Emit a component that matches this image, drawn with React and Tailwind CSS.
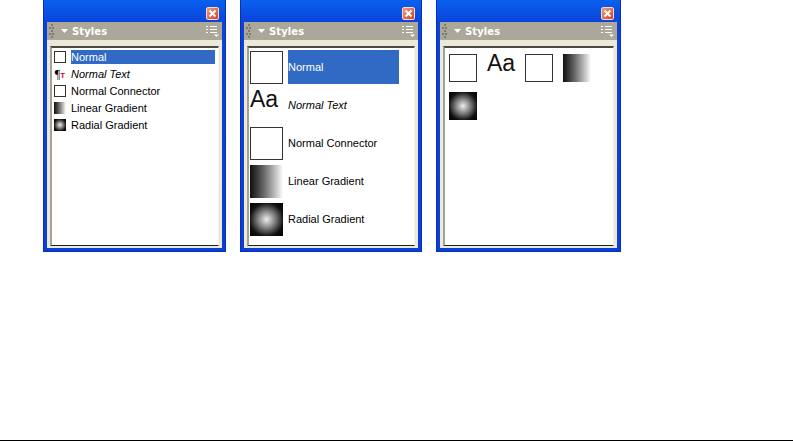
const sans = { fontFamily: '"Liberation Sans", Arial, sans-serif' };

function CloseBtn() {
  return (
    <div className="w-[13px] h-[13px] rounded-[2px] border border-[#f3d9cf] bg-gradient-to-br from-[#ee9a7c] to-[#d8391c] flex items-center justify-center">
      <svg width="9" height="9" viewBox="0 0 9 9"><path d="M1.5 1.5L7.5 7.5M7.5 1.5L1.5 7.5" stroke="#fff" strokeWidth="2" /></svg>
    </div>
  );
}

function Grip() {
  return (
    <svg width="5" height="14" viewBox="0 0 5 14" className="shrink-0">
      {[[2,0],[0,3],[3,3],[2,6],[0,9],[3,9],[2,12]].map(([x,y],i)=>(
        <rect key={i} x={x} y={y} width="2" height="2" fill="#7f7b6c" />
      ))}
    </svg>
  );
}

function Menu() {
  return (
    <svg width="13" height="12" viewBox="0 0 13 12" className="shrink-0">
      <path d="M0 1.5h2M4 1.5h7M0 4.5h2M4 4.5h7M0 7.5h2M4 7.5h7" stroke="#fff" strokeWidth="1.2" />
      <path d="M8 9.5h5l-2.5 2.5z" fill="#fff" />
    </svg>
  );
}

function Panel({ width, children, pad }) {
  return (
    <div className={`${width} h-[252px] shrink-0 flex flex-col bg-[linear-gradient(to_bottom,#0a60ee_0px,#0a44da_22px,#0a3ed6_100%)] border-x-[1px] border-b-[1px] border-[#0a2fb8] px-[3px] pb-[3px]`}>
      <div className="h-[22px] shrink-0 flex items-end justify-end pb-[2px] pr-[3px]"><CloseBtn /></div>
      <div className="h-[18px] shrink-0 bg-[#aca899] flex items-center pl-[2px] pr-[3px]">
        <Grip />
        <svg width="7" height="4" viewBox="0 0 7 4" className="ml-[7px] mr-[4px]"><path d="M0 0h7L3.5 4z" fill="#fff" /></svg>
        <span className="text-[10px] font-bold text-white flex-1 tracking-[0.1px]" style={{ fontFamily: '"DejaVu Sans", sans-serif' }}>Styles</span>
        <Menu />
      </div>
      <div className="flex-1 bg-[#ece9d8] pt-[6px] px-[3px] pb-[2px] flex flex-col min-h-0">
        <div className={`flex-1 bg-white border-t-2 border-l-2 border-t-[#4a4a44] border-l-[#a5a296] border-b border-b-[#222] border-r border-r-[#f5f3e8] ${pad}`} style={sans}>
          {children}
        </div>
      </div>
    </div>
  );
}

const boxSm = "w-[12px] h-[12px] border border-[#333] bg-white";

function Row1({ icon, label, selected, italic }) {
  return (
    <div className="h-[17px] flex items-center">
      <div className="w-[14px] flex justify-center mr-[4px] shrink-0">{icon}</div>
      <span className={`flex-1 h-[14px] leading-[14px] text-[11px] ${selected ? "bg-[#316ac5] text-white" : "text-black"} ${italic ? "italic" : ""}`}>{label}</span>
    </div>
  );
}

const LinearBg = "bg-gradient-to-r from-[#111] to-white";
const RadialBg = "bg-[radial-gradient(circle,#eee_0%,#777_40%,#111_72%,#000_100%)]";

function Row2({ icon, label, selected, italic }) {
  return (
    <div className="h-[38px] flex items-center">
      <div className="w-[33px] h-[33px] mr-[5px] shrink-0 flex items-center justify-center">{icon}</div>
      <span className={`h-[34px] leading-[34px] text-[11px] w-[111px] ${selected ? "bg-[#316ac5] text-white" : "text-black"} ${italic ? "italic" : ""}`}>{label}</span>
    </div>
  );
}

function AaBig({ size }) {
  return <span className={`${size} leading-none text-[#111]`}>Aa</span>;
}

export default function App() {
  return (
    <div className="w-[793px] h-[442px] bg-white flex flex-col justify-between overflow-hidden">
      <div className="flex pl-[43px] gap-[14px]">
        <Panel width="w-[183px]" pad="pl-[1px] pr-[3px]">
          <Row1 selected label="Normal" icon={<div className={boxSm} />} />
          <Row1 italic label="Normal Text" icon={
            <span className="flex items-end leading-none whitespace-nowrap text-black">
              <span className="text-[12px]" style={{ fontFamily: '"Liberation Serif", serif' }}>¶</span>
              <span className="text-[#d01010] font-bold text-[8px]">T</span>
            </span>
          } />
          <Row1 label="Normal Connector" icon={<div className={boxSm} />} />
          <Row1 label="Linear Gradient" icon={<div className={`w-[12px] h-[12px] ${LinearBg}`} />} />
          <Row1 label="Radial Gradient" icon={<div className={`w-[12px] h-[12px] ${RadialBg}`} />} />
        </Panel>
        <Panel width="w-[182px]" pad="pl-[1px] pr-[2px]">
          <Row2 selected label="Normal" icon={<div className="w-[33px] h-[33px] border border-[#333] bg-white" />} />
          <Row2 italic label="Normal Text" icon={<div className="w-[33px] h-[33px] -mt-[2px]"><AaBig size="text-[23px]" /></div>} />
          <Row2 label="Normal Connector" icon={<div className="w-[33px] h-[33px] border border-[#333] bg-white" />} />
          <Row2 label="Linear Gradient" icon={<div className={`w-[33px] h-[33px] ${LinearBg}`} />} />
          <Row2 label="Radial Gradient" icon={<div className={`w-[33px] h-[33px] ${RadialBg}`} />} />
        </Panel>
        <Panel width="w-[185px]" pad="pl-[4px] pt-[6px]">
          <div className="grid grid-cols-[repeat(4,28px)] gap-x-[10px] gap-y-[10px]">
            <div className="w-[28px] h-[28px] border border-[#333] bg-white" />
            <div className="w-[28px] h-[28px] flex items-start justify-center -mt-[2px]"><AaBig size="text-[23px]" /></div>
            <div className="w-[28px] h-[28px] border border-[#333] bg-white" />
            <div className={`w-[28px] h-[28px] ${LinearBg}`} />
            <div className={`w-[28px] h-[28px] ${RadialBg}`} />
          </div>
        </Panel>
      </div>
      <div className="h-[1px] mb-[1px] bg-black" />
    </div>
  );
}
